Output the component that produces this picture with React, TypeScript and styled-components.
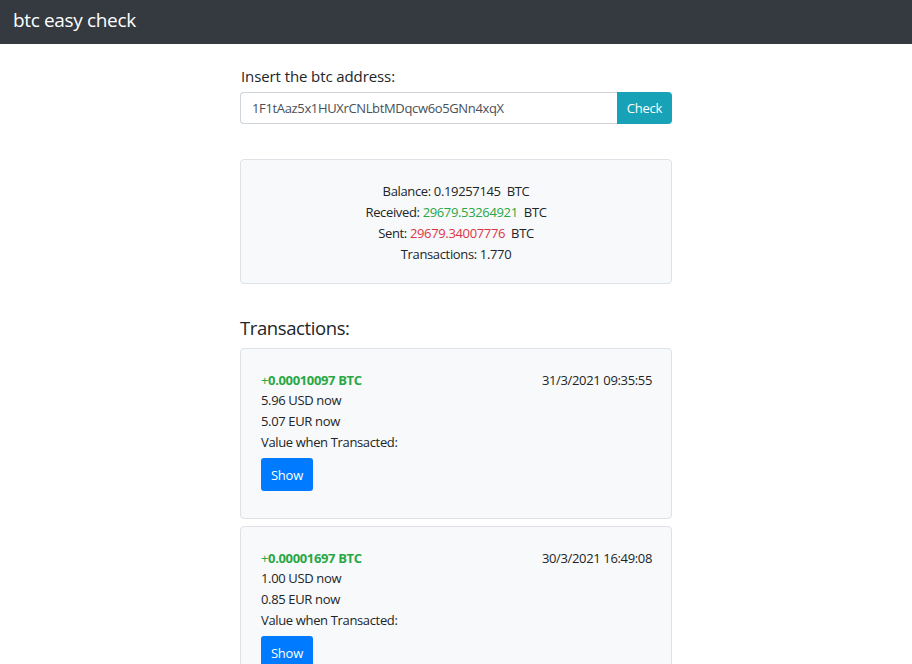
import React from "react";
import styled, { createGlobalStyle } from "styled-components";

const Global = createGlobalStyle`
  html, body { margin: 0; padding: 0; background: #fff; }
  body {
    font-family: "Open Sans", "Noto Sans", sans-serif;
    color: #212529;
  }
  * { box-sizing: border-box; }
`;

const Navbar = styled.header`
  height: 44px;
  background: #343a40;
  display: flex;
  align-items: center;
  padding: 0 13px;
`;

const Brand = styled.div`
  color: #fff;
  font-size: 19px;
  letter-spacing: -0.35px;
  line-height: 24px;
  margin-top: -4px;
`;

const Container = styled.main`
  width: 432px;
  margin: 0 auto;
  padding-top: 20px;
`;

const Label = styled.label`
  display: block;
  font-size: 15px;
  letter-spacing: -0.1px;
  line-height: 24px;
  margin-bottom: 4px;
  padding-left: 1px;
`;

const InputGroup = styled.div`
  display: flex;
  height: 32px;
`;

const AddressInput = styled.input`
  flex: 1;
  min-width: 0;
  height: 32px;
  border: 1px solid #ced4da;
  border-right: none;
  border-radius: 4px 0 0 4px;
  padding: 0 11px;
  font-family: inherit;
  font-size: 13px;
  letter-spacing: -0.35px;
  color: #495057;
  background: #fff;
  outline: none;
`;

const CheckButton = styled.button`
  width: 55px;
  height: 32px;
  border: none;
  border-radius: 0 4px 4px 0;
  background: #17a2b8;
  color: #fff;
  font-family: inherit;
  font-size: 13px;
  letter-spacing: -0.2px;
  padding: 0;
`;

const Card = styled.section<{ $center?: boolean }>`
  background: #f8f9fa;
  border: 1px solid #dee2e6;
  border-radius: 4px;
  padding: ${(p) => (p.$center ? "21px 20px 18px" : "21px 19px 27px 20px")};
  text-align: ${(p) => (p.$center ? "center" : "left")};
  font-size: 13px;
  letter-spacing: -0.35px;
  line-height: 21px;
`;

const Summary = styled(Card)`
  margin-top: 35px;
`;

const Line = styled.div``;

const Amount = styled.span<{ $color: string }>`
  color: ${(p) => p.$color};
`;

const Heading = styled.h4`
  margin: 32px 0 8px;
  font-size: 18.5px;
  letter-spacing: -0.4px;
  font-weight: 400;
  line-height: 24px;
`;

const TxList = styled.div`
  display: flex;
  flex-direction: column;
  gap: 7px;
`;

const TxTop = styled.div`
  display: flex;
  justify-content: space-between;
  align-items: baseline;
  line-height: 20px;
`;

const TxAmount = styled.div`
  color: #28a745;
`;

const Bold = styled.b`
  font-weight: 700;
`;

const ShowButton = styled.button`
  margin-top: 5px;
  width: 52px;
  height: 33px;
  border: none;
  border-radius: 3px;
  background: #007bff;
  color: #fff;
  font-family: inherit;
  font-size: 13px;
  letter-spacing: -0.2px;
  padding: 0;
`;

const txs = [
  { amt: "0.00010097", date: "31/3/2021 09:35:55", usd: "5.96", eur: "5.07" },
  { amt: "0.00001697", date: "30/3/2021 16:49:08", usd: "1.00", eur: "0.85" },
];

export default function App() {
  return (
    <>
      <Global />
      <Navbar>
        <Brand>btc easy check</Brand>
      </Navbar>
      <Container>
        <Label>Insert the btc address:</Label>
        <InputGroup>
          <AddressInput defaultValue="1F1tAaz5x1HUXrCNLbtMDqcw6o5GNn4xqX" />
          <CheckButton>Check</CheckButton>
        </InputGroup>
        <Summary $center>
          <Line>Balance: 0.19257145&nbsp; BTC</Line>
          <Line>
            Received: <Amount $color="#28a745">29679.53264921</Amount>&nbsp; BTC
          </Line>
          <Line>
            Sent: <Amount $color="#dc3545">29679.34007776</Amount>&nbsp; BTC
          </Line>
          <Line>Transactions: 1.770</Line>
        </Summary>
        <Heading>Transactions:</Heading>
        <TxList>
          {txs.map((t) => (
            <Card key={t.date}>
              <TxTop>
                <TxAmount>
                  +<Bold>{t.amt} BTC</Bold>
                </TxAmount>
                <div>{t.date}</div>
              </TxTop>
              <Line>{t.usd} USD now</Line>
              <Line>{t.eur} EUR now</Line>
              <Line>Value when Transacted:</Line>
              <ShowButton>Show</ShowButton>
            </Card>
          ))}
        </TxList>
      </Container>
    </>
  );
}
